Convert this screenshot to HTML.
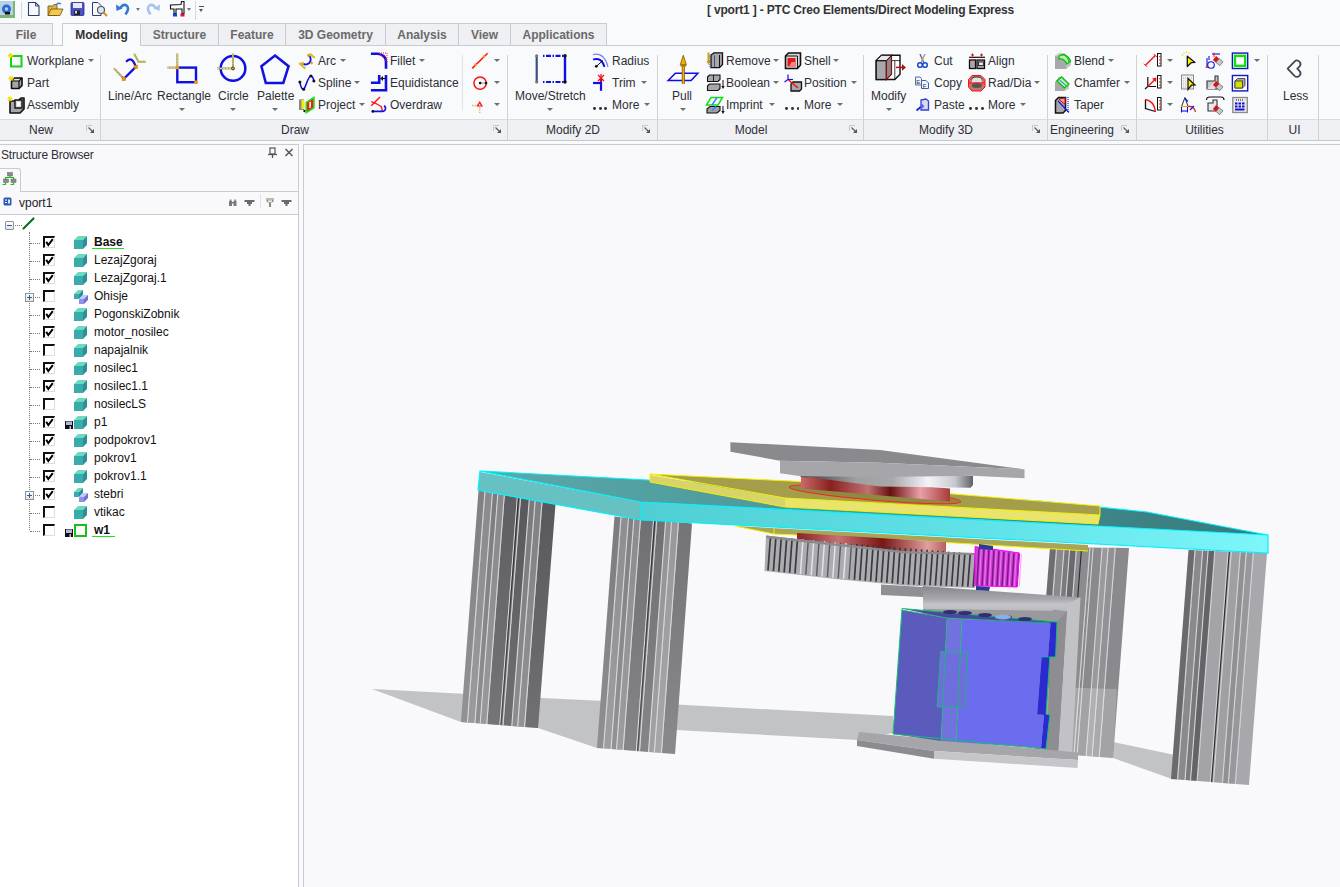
<!DOCTYPE html>
<html><head><meta charset="utf-8">
<style>
*{margin:0;padding:0;box-sizing:border-box}
html,body{width:1340px;height:887px;overflow:hidden;background:#f9fafc;font-family:"Liberation Sans",sans-serif;color:#3d3d3d;position:relative}
.a{position:absolute}
.t{position:absolute;font-size:12px;line-height:14px;white-space:nowrap;color:#2e2e36}
.tab{position:absolute;top:23px;height:22px;border:1px solid #c9cbcf;border-bottom:none;background:#eef0f3;font-weight:bold;font-size:12px;line-height:22px;text-align:center;color:#6a6a6a}
.sep{position:absolute;width:1px;background:#d0d1d5}
.dd{position:absolute;width:0;height:0;border-left:3px solid transparent;border-right:3px solid transparent;border-top:3px solid #6e6e6e}
.gl{position:absolute;top:120px;height:20px;font-size:12px;line-height:21px;color:#2e2e36;text-align:center}
.tr{position:absolute;font-size:12px;line-height:14px;white-space:nowrap;color:#111}
svg{position:absolute;overflow:visible}
</style></head><body>
<!-- title bar -->
<div class="a" style="left:0;top:0;width:1340px;height:23px;background:#f9fafc"></div>
<div class="t" style="left:707px;top:3px;font-weight:bold;color:#333;font-size:12px;letter-spacing:-0.18px">[ vport1 ] - PTC Creo Elements/Direct Modeling Express</div>

<!-- tabs row baseline -->
<div class="a" style="left:0;top:45px;width:1340px;height:1px;background:#c9cbcf"></div>
<div class="tab" style="left:0;width:53px;border-left:none">File</div>
<div class="tab" style="left:62px;width:79px;background:#f9fafc;color:#333;height:23px;z-index:2">Modeling</div>
<div class="tab" style="left:141px;width:78px;border-left:none">Structure</div>
<div class="tab" style="left:219px;width:67px;border-left:none">Feature</div>
<div class="tab" style="left:286px;width:100px;border-left:none">3D Geometry</div>
<div class="tab" style="left:386px;width:73px;border-left:none">Analysis</div>
<div class="tab" style="left:459px;width:52px;border-left:none">View</div>
<div class="tab" style="left:511px;width:96px;border-left:none">Applications</div>

<!-- ribbon body -->
<div class="a" style="left:0;top:46px;width:1340px;height:73px;background:#f9fafc"></div>
<div class="a" style="left:0;top:119px;width:1340px;height:1px;background:#d9dbde"></div>
<div class="a" style="left:0;top:120px;width:1340px;height:20px;background:#eff0f3"></div>
<div class="a" style="left:0;top:140px;width:1340px;height:1px;background:#c6c7cb"></div>
<div class="a" style="left:0;top:141px;width:1340px;height:3px;background:#f9fafc"></div>

<!-- group separators -->
<div class="sep" style="left:100px;top:55px;height:85px"></div>
<div class="sep" style="left:507px;top:55px;height:85px"></div>
<div class="sep" style="left:657px;top:55px;height:85px"></div>
<div class="sep" style="left:863px;top:55px;height:85px"></div>
<div class="sep" style="left:1047px;top:55px;height:85px"></div>
<div class="sep" style="left:1136px;top:55px;height:85px"></div>
<div class="sep" style="left:1267px;top:55px;height:85px"></div>
<div class="sep" style="left:1318px;top:55px;height:85px"></div>
<div class="sep" style="left:462px;top:55px;height:56px;background:#e3e4e7"></div>

<!-- group labels -->
<div class="gl" style="left:0;width:82px">New</div>
<div class="gl" style="left:100px;width:390px">Draw</div>
<div class="gl" style="left:507px;width:132px">Modify 2D</div>
<div class="gl" style="left:657px;width:188px">Model</div>
<div class="gl" style="left:863px;width:166px">Modify 3D</div>
<div class="gl" style="left:1047px;width:70px">Engineering</div>
<div class="gl" style="left:1139px;width:131px">Utilities</div>
<div class="gl" style="left:1269px;width:51px">UI</div>

<!-- ribbon text -->
<div class="t" style="left:27px;top:54px">Workplane</div>
<div class="t" style="left:27px;top:76px">Part</div>
<div class="t" style="left:27px;top:98px">Assembly</div>
<div class="t" style="left:108px;top:89px">Line/Arc</div>
<div class="t" style="left:157px;top:89px">Rectangle</div>
<div class="t" style="left:218px;top:89px">Circle</div>
<div class="t" style="left:257px;top:89px">Palette</div>
<div class="t" style="left:318px;top:54px">Arc</div>
<div class="t" style="left:318px;top:76px">Spline</div>
<div class="t" style="left:318px;top:98px">Project</div>
<div class="t" style="left:390px;top:54px">Fillet</div>
<div class="t" style="left:390px;top:76px">Equidistance</div>
<div class="t" style="left:390px;top:98px">Overdraw</div>
<div class="t" style="left:515px;top:89px">Move/Stretch</div>
<div class="t" style="left:612px;top:54px">Radius</div>
<div class="t" style="left:612px;top:76px">Trim</div>
<div class="t" style="left:612px;top:98px">More</div>
<div class="t" style="left:672px;top:89px">Pull</div>
<div class="t" style="left:726px;top:54px">Remove</div>
<div class="t" style="left:726px;top:76px">Boolean</div>
<div class="t" style="left:726px;top:98px">Imprint</div>
<div class="t" style="left:804px;top:54px">Shell</div>
<div class="t" style="left:804px;top:76px">Position</div>
<div class="t" style="left:804px;top:98px">More</div>
<div class="t" style="left:871px;top:89px">Modify</div>
<div class="t" style="left:934px;top:54px">Cut</div>
<div class="t" style="left:934px;top:76px">Copy</div>
<div class="t" style="left:934px;top:98px">Paste</div>
<div class="t" style="left:988px;top:54px">Align</div>
<div class="t" style="left:988px;top:76px">Rad/Dia</div>
<div class="t" style="left:988px;top:98px">More</div>
<div class="t" style="left:1074px;top:54px">Blend</div>
<div class="t" style="left:1074px;top:76px">Chamfer</div>
<div class="t" style="left:1074px;top:98px">Taper</div>
<div class="t" style="left:1283px;top:89px">Less</div>

<!-- dropdown arrows -->
<div class="dd" style="left:88px;top:59px"></div>
<div class="dd" style="left:179px;top:108px"></div>
<div class="dd" style="left:230px;top:108px"></div>
<div class="dd" style="left:272px;top:108px"></div>
<div class="dd" style="left:340px;top:59px"></div>
<div class="dd" style="left:354px;top:81px"></div>
<div class="dd" style="left:359px;top:103px"></div>
<div class="dd" style="left:419px;top:59px"></div>
<div class="dd" style="left:494px;top:59px"></div>
<div class="dd" style="left:494px;top:81px"></div>
<div class="dd" style="left:494px;top:103px"></div>
<div class="dd" style="left:547px;top:108px"></div>
<div class="dd" style="left:641px;top:81px"></div>
<div class="dd" style="left:644px;top:103px"></div>
<div class="dd" style="left:680px;top:108px"></div>
<div class="dd" style="left:773px;top:59px"></div>
<div class="dd" style="left:773px;top:81px"></div>
<div class="dd" style="left:769px;top:103px"></div>
<div class="dd" style="left:833px;top:59px"></div>
<div class="dd" style="left:851px;top:81px"></div>
<div class="dd" style="left:837px;top:103px"></div>
<div class="dd" style="left:886px;top:108px"></div>
<div class="dd" style="left:1034px;top:81px"></div>
<div class="dd" style="left:1020px;top:103px"></div>
<div class="dd" style="left:1108px;top:59px"></div>
<div class="dd" style="left:1124px;top:81px"></div>
<div class="dd" style="left:1167px;top:59px"></div>
<div class="dd" style="left:1167px;top:81px"></div>
<div class="dd" style="left:1167px;top:103px"></div>
<div class="dd" style="left:1254px;top:59px"></div>

<!-- ICONS -->
<svg style="left:7px;top:52px" width="18" height="18" viewBox="0 0 18 18"><rect x="4" y="4" width="10.5" height="10.5" fill="none" stroke="#18d018" stroke-width="2"/><g stroke="#f0e000" stroke-width="1.1"><line x1="0.8999999999999999" y1="3.5" x2="6.1" y2="3.5"/><line x1="3.5" y1="0.8999999999999999" x2="3.5" y2="6.1"/><line x1="1.6800000000000002" y1="1.6800000000000002" x2="5.32" y2="5.32"/><line x1="1.6800000000000002" y1="5.32" x2="5.32" y2="1.6800000000000002"/></g></svg>
<svg style="left:7px;top:74px" width="18" height="18" viewBox="0 0 18 18"><polygon points="4.5,7 7.5,4 15,4 15,11.5 12,14.5 4.5,14.5" fill="#a6a6aa" stroke="#111" stroke-width="1.6" stroke-linejoin="round"/><polyline points="4.5,7 12,7 15,4 M12,7" fill="none" stroke="#111" stroke-width="1.2"/><line x1="12" y1="7" x2="12" y2="14.5" stroke="#111" stroke-width="1.2"/><polygon points="6,6 8,5 13,5 11.5,6.2" fill="#e8e8ea"/><g stroke="#f0e000" stroke-width="1.1"><line x1="1.4" y1="4.5" x2="6.6" y2="4.5"/><line x1="4" y1="1.9" x2="4" y2="7.1"/><line x1="2.18" y1="2.68" x2="5.82" y2="6.32"/><line x1="2.18" y1="6.32" x2="5.82" y2="2.68"/></g></svg>
<svg style="left:6px;top:95px" width="20" height="20" viewBox="0 0 20 20"><polygon points="4,6 12,6 15,3 18,3 18,14 14,18 4,18" fill="#a6a6aa" stroke="#111" stroke-width="1.6" stroke-linejoin="round"/><polygon points="9,5 16,5 16,13 9,13" fill="#d8d8da" stroke="#111" stroke-width="1.4"/><rect x="11" y="7" width="3" height="4" fill="#fff"/><g stroke="#f0e000" stroke-width="1.1"><line x1="1.4" y1="4" x2="6.6" y2="4"/><line x1="4" y1="1.4" x2="4" y2="6.6"/><line x1="2.18" y1="2.18" x2="5.82" y2="5.82"/><line x1="2.18" y1="5.82" x2="5.82" y2="2.18"/></g></svg>
<svg style="left:105px;top:48px" width="50" height="40" viewBox="0 0 50 40"><line x1="9" y1="20.4" x2="18.9" y2="30.8" stroke="#9a9a60" stroke-width="2"/><line x1="9" y1="20.4" x2="18.9" y2="30.8" stroke="#f0e060" stroke-width="1" stroke-dasharray="2,1"/><polyline points="29.1,5.8 33.5,13.8 40.7,13.8" fill="none" stroke="#9a9a60" stroke-width="2"/><polyline points="29.1,5.8 33.5,13.8 40.7,13.8" fill="none" stroke="#f0e060" stroke-width="1" stroke-dasharray="2,1"/><line x1="18.9" y1="30.8" x2="30.8" y2="18.9" stroke="#1010e0" stroke-width="2.3"/><path d="M21.1,13.8 Q27,7 30.8,18.9" fill="none" stroke="#1010e0" stroke-width="2.3"/><rect x="17.2" y="29.1" width="3.4" height="3.4" fill="#f09a10" stroke="#c06000" stroke-width="0.5"/><rect x="29.1" y="17.2" width="3.4" height="3.4" fill="#f09a10" stroke="#c06000" stroke-width="0.5"/></svg>
<svg style="left:160px;top:48px" width="45" height="40" viewBox="0 0 45 40"><line x1="17.3" y1="5.5" x2="17.3" y2="19.6" stroke="#9a9a70" stroke-width="2"/><line x1="17.3" y1="5.5" x2="17.3" y2="19.6" stroke="#f0e060" stroke-width="1" stroke-dasharray="2,1"/><line x1="7.3" y1="19.6" x2="17.3" y2="19.6" stroke="#9a9a70" stroke-width="2"/><line x1="7.3" y1="19.6" x2="17.3" y2="19.6" stroke="#f0e060" stroke-width="1" stroke-dasharray="2,1"/><rect x="17.3" y="19.6" width="18.7" height="14.6" fill="none" stroke="#1010e0" stroke-width="2.4"/><circle cx="17.3" cy="19.6" r="1.9" fill="#f09a10"/><circle cx="36" cy="34.2" r="1.9" fill="#f09a10"/></svg>
<svg style="left:210px;top:48px" width="45" height="40" viewBox="0 0 45 40"><circle cx="23" cy="20.4" r="12.3" fill="none" stroke="#1010e0" stroke-width="2.5"/><line x1="23" y1="5.5" x2="23" y2="20.4" stroke="#9a9a70" stroke-width="2"/><line x1="23" y1="5.5" x2="23" y2="20.4" stroke="#f0e060" stroke-width="1" stroke-dasharray="2,1"/><line x1="7" y1="20.4" x2="23" y2="20.4" stroke="#9a9a70" stroke-width="2"/><line x1="7" y1="20.4" x2="23" y2="20.4" stroke="#f0e060" stroke-width="1" stroke-dasharray="2,1"/><circle cx="23" cy="20.4" r="1.5" fill="#f09a10" stroke="#000" stroke-width="0.6"/></svg>
<svg style="left:255px;top:48px" width="40" height="40" viewBox="0 0 40 40"><polygon points="20,7.6 33.6,18.2 28.3,34.9 10.8,34.9 6.4,18.2" fill="none" stroke="#1010e0" stroke-width="2.5" stroke-linejoin="miter"/></svg>
<svg style="left:296px;top:50px" width="22" height="22" viewBox="0 0 22 22"><path d="M12.6,5.2 A5,5 0 1 1 6.6,13.5" fill="none" stroke="#1010e0" stroke-width="1.8"/><line x1="13.7" y1="3.7" x2="18.6" y2="7.8" stroke="#a0a040" stroke-width="2"/><line x1="13.7" y1="3.7" x2="18.6" y2="7.8" stroke="#f8f000" stroke-width="1"/><line x1="3.2" y1="13.1" x2="9.2" y2="18.4" stroke="#a0a040" stroke-width="2"/><line x1="3.2" y1="13.1" x2="9.2" y2="18.4" stroke="#f8f000" stroke-width="1"/><circle cx="12.6" cy="5.2" r="1.5" fill="#f09a10"/><circle cx="6.6" cy="13.5" r="1.5" fill="#f09a10"/><circle cx="15.6" cy="13.1" r="1.3" fill="#f09a10"/></svg>
<svg style="left:296px;top:72px" width="22" height="22" viewBox="0 0 22 22"><path d="M3.9,10 C4.5,15 6.5,18 7.7,17.2 C10,15 12,4 14.9,4 C16.5,4 17.5,7 17.9,8.9" fill="none" stroke="#1010e0" stroke-width="1.6"/><circle cx="3.9" cy="10" r="1.5" fill="#111"/><circle cx="7.7" cy="17.2" r="1.5" fill="#111"/><circle cx="14.9" cy="4" r="1.5" fill="#111"/><circle cx="17.9" cy="8.9" r="1.5" fill="#111"/></svg>
<svg style="left:296px;top:94px" width="22" height="22" viewBox="0 0 22 22"><rect x="3" y="5.4" width="5" height="10.6" fill="#8a8a8a"/><rect x="5.5" y="6" width="3" height="9" fill="#f0f000"/><circle cx="8.5" cy="17" r="1.2" fill="#111"/><polygon points="10.3,18.6 10.3,8.4 17.9,3.5 17.9,13.7" fill="#ff1818" stroke="#18e018" stroke-width="1.6"/><rect x="13.3" y="8" width="1.6" height="6" fill="#fff" transform="skewY(-30) translate(0,8)"/></svg>
<svg style="left:368px;top:50px" width="22" height="22" viewBox="0 0 22 22"><path d="M2.9,3.7 L10,3.7 Q18,5 18,11.6 L18,18.8" fill="none" stroke="#1010e0" stroke-width="2.6"/><polygon points="11,3 19,3 19,12" fill="none" stroke="#ff2020" stroke-width="1" stroke-dasharray="1,1"/></svg>
<svg style="left:368px;top:72px" width="22" height="22" viewBox="0 0 22 22"><polyline points="18,3 18,18.3 2.9,18.3" fill="none" stroke="#1010e0" stroke-width="2.6"/><polyline points="11.2,3 11.2,10.7 2.9,10.7" fill="none" stroke="#1010e0" stroke-width="2.6"/><line x1="12.5" y1="6.5" x2="17" y2="6.5" stroke="#111" stroke-width="1.2"/><polygon points="12.3,6.5 15,4 15,9" fill="#111"/></svg>
<svg style="left:368px;top:94px" width="22" height="22" viewBox="0 0 22 22"><line x1="3.3" y1="11.8" x2="12" y2="3.1" stroke="#ff1010" stroke-width="1.4"/><path d="M3.3,7.6 Q10,10 13.1,12.5 Q14,15 14.5,17" fill="none" stroke="#ff1010" stroke-width="1.4"/><path d="M4.8,17.4 L14.6,17.4 A3,3 0 0 0 16,11.8" fill="none" stroke="#1010e0" stroke-width="1.6"/><circle cx="4.8" cy="17.4" r="1.4" fill="#111"/></svg>
<svg style="left:468px;top:50px" width="22" height="22" viewBox="0 0 22 22"><line x1="4.2" y1="18.4" x2="19.6" y2="3.3" stroke="#ff1010" stroke-width="1.5"/><circle cx="7.6" cy="14.6" r="1.4" fill="#f0a020"/><circle cx="15.9" cy="6.7" r="1.4" fill="#f0a020"/></svg>
<svg style="left:468px;top:72px" width="22" height="22" viewBox="0 0 22 22"><circle cx="12.1" cy="11.1" r="6.2" fill="none" stroke="#ff1010" stroke-width="1.5"/><line x1="12.1" y1="11.1" x2="18" y2="11.1" stroke="#777" stroke-width="0.8"/><circle cx="12.1" cy="11.1" r="1.3" fill="#111"/><circle cx="18.1" cy="11.1" r="1.3" fill="#111"/></svg>
<svg style="left:468px;top:94px" width="22" height="22" viewBox="0 0 22 22"><line x1="4" y1="11.5" x2="10" y2="11.5" stroke="#e0c060" stroke-width="1.5" stroke-dasharray="1.5,1"/><line x1="11.7" y1="13" x2="11.7" y2="19" stroke="#e0c060" stroke-width="1.5" stroke-dasharray="1.5,1"/><polygon points="11.7,7 15,12.5 8.4,12.5" fill="#ff1010"/><polygon points="11.7,9.5 12.8,11.6 10.6,11.6" fill="#fff"/></svg>
<svg style="left:530px;top:50px" width="42" height="36" viewBox="0 0 42 36"><line x1="6.7" y1="5.8" x2="6.7" y2="32" stroke="#3a5080" stroke-width="2.2"/><circle cx="6.7" cy="5.8" r="1.6" fill="#777"/><circle cx="6.7" cy="32" r="1.6" fill="#777"/><line x1="13" y1="5.8" x2="35" y2="5.8" stroke="#1010e0" stroke-width="2.2" stroke-dasharray="1.5,1.5,5,1.5"/><line x1="13" y1="32" x2="35" y2="32" stroke="#1010e0" stroke-width="2.2" stroke-dasharray="1.5,1.5,5,1.5"/><line x1="35" y1="5.8" x2="35" y2="32" stroke="#1010e0" stroke-width="2.4"/><circle cx="35" cy="5.8" r="1.7" fill="#111"/><circle cx="35" cy="32" r="1.7" fill="#111"/></svg>
<svg style="left:590px;top:50px" width="22" height="22" viewBox="0 0 22 22"><path d="M3,4.6 Q14,2 18,17" fill="none" stroke="#8080f0" stroke-width="1.3"/><path d="M3,9.5 Q12,7 14.5,17" fill="none" stroke="#1010e0" stroke-width="1.8"/><line x1="6.3" y1="16.3" x2="13" y2="10.5" stroke="#111" stroke-width="1"/><circle cx="6.3" cy="16.3" r="1.4" fill="#111"/></svg>
<svg style="left:590px;top:72px" width="22" height="22" viewBox="0 0 22 22"><line x1="3" y1="11" x2="11" y2="11" stroke="#1010e0" stroke-width="2.2"/><line x1="11" y1="6.3" x2="11" y2="18.8" stroke="#1010e0" stroke-width="2.2"/><g stroke="#ff1010" stroke-width="1.3"><line x1="8" y1="3" x2="14" y2="9"/><line x1="14" y1="3" x2="8" y2="9"/><line x1="11" y1="2" x2="11" y2="10"/></g></svg>
<div class="a" style="left:593.3000000000001px;top:107.2px;width:2.8px;height:2.8px;border-radius:50%;background:#333"></div>
<div class="a" style="left:598.8000000000001px;top:107.2px;width:2.8px;height:2.8px;border-radius:50%;background:#333"></div>
<div class="a" style="left:604.3000000000001px;top:107.2px;width:2.8px;height:2.8px;border-radius:50%;background:#333"></div>
<svg style="left:664px;top:50px" width="40" height="40" viewBox="0 0 40 40"><polygon points="4.2,30.5 11.4,23.2 33.8,23.2 27.1,30.5" fill="none" stroke="#1010e0" stroke-width="1.6"/><line x1="19.3" y1="14" x2="19.3" y2="33.8" stroke="#7a5000" stroke-width="3"/><line x1="19.3" y1="14" x2="19.3" y2="33.8" stroke="#f0b000" stroke-width="1.6"/><polygon points="19.3,5.3 22.4,14.8 16.2,14.8" fill="#f0b000" stroke="#7a5000" stroke-width="0.8"/><rect x="16.5" y="14.5" width="5.6" height="2" fill="#b07800"/></svg>
<svg style="left:704px;top:50px" width="22" height="22" viewBox="0 0 22 22"><rect x="3.5" y="2.5" width="2" height="10" fill="#d0a000"/><polygon points="2.5,11 6.5,11 4.5,15" fill="#d0a000"/><polygon points="7,5 10,2.8 18.5,2.8 18.5,14.5 15.5,17.7 7,17.7" fill="#a8a8ac" stroke="#111" stroke-width="1.3"/><line x1="15.5" y1="5" x2="15.5" y2="17.7" stroke="#111" stroke-width="1"/><line x1="10.5" y1="5.5" x2="10.5" y2="17" stroke="#333" stroke-width="0.8"/><rect x="5.5" y="5" width="5" height="12" fill="none" stroke="#3060e0" stroke-width="0.6" stroke-dasharray="1,1"/></svg>
<svg style="left:704px;top:72px" width="22" height="22" viewBox="0 0 22 22"><polygon points="3.5,5 5.5,3 16,3 16,7.5 14,9.5 3.5,9.5" fill="#a8a8ac" stroke="#111" stroke-width="1.1"/><line x1="9.5" y1="3" x2="9.5" y2="9.5" stroke="#111" stroke-width="0.9"/><polygon points="3.5,14 5.5,12 16,12 16,16.5 14,18.5 3.5,18.5" fill="#a8a8ac" stroke="#111" stroke-width="1.1"/><line x1="19" y1="8" x2="19" y2="15" stroke="#111" stroke-width="1"/><polygon points="17.3,14 20.7,14 19,17" fill="#111"/></svg>
<svg style="left:704px;top:94px" width="22" height="22" viewBox="0 0 22 22"><polygon points="2.5,11 7,3.5 18.5,3.5 14,11" fill="none" stroke="#10e010" stroke-width="1.5"/><line x1="8" y1="11" x2="13" y2="3.5" stroke="#3080ff" stroke-width="1.4"/><polygon points="3,15 6,12.5 16,12.5 16,16.5 13,19 3,19" fill="#a0a0a4" stroke="#111" stroke-width="1.1"/><line x1="8" y1="16.5" x2="12" y2="12.5" stroke="#3080ff" stroke-width="1.4"/><line x1="19" y1="12" x2="19" y2="18" stroke="#111" stroke-width="1"/><polygon points="17.3,17 20.7,17 19,20" fill="#111"/></svg>
<svg style="left:782px;top:50px" width="22" height="22" viewBox="0 0 22 22"><polygon points="3.5,6 6.5,3 18.5,3 18.5,15 15.5,18.5 3.5,18.5" fill="#d8d8da" stroke="#111" stroke-width="1.6"/><line x1="15.5" y1="6" x2="15.5" y2="18.5" stroke="#111" stroke-width="1"/><line x1="3.5" y1="6" x2="15.5" y2="6" stroke="#111" stroke-width="1"/><rect x="5.5" y="8" width="8" height="8.5" fill="#e01818"/><polygon points="9.5,12 13.5,12 13.5,16.5 7,16.5" fill="#ff8080"/></svg>
<svg style="left:782px;top:72px" width="22" height="22" viewBox="0 0 22 22"><polyline points="6,2.5 6,7.5 2.5,10" fill="none" stroke="#1010e0" stroke-width="1.2"/><line x1="6" y1="7.5" x2="11" y2="7.5" stroke="#1010e0" stroke-width="1.2"/><polygon points="9,12 11,10 19.5,10 19.5,17 17.5,19 9,19" fill="#a8a8ac" stroke="#111" stroke-width="1.3"/><line x1="6.5" y1="8" x2="16" y2="16" stroke="#ff1010" stroke-width="1.6"/></svg>
<div class="a" style="left:785.4px;top:107px;width:2.8px;height:2.8px;border-radius:50%;background:#333"></div>
<div class="a" style="left:791.0px;top:107px;width:2.8px;height:2.8px;border-radius:50%;background:#333"></div>
<div class="a" style="left:796.6px;top:107px;width:2.8px;height:2.8px;border-radius:50%;background:#333"></div>
<svg style="left:870px;top:50px" width="42" height="36" viewBox="0 0 42 36"><polygon points="6.2,10.6 11.5,5.3 30,5.3 30,24.2 24.8,29.5 6.2,29.5" fill="#fff" stroke="#111" stroke-width="1.4"/><rect x="6.2" y="10.6" width="10.2" height="18.9" fill="#a8a8ac" stroke="#111" stroke-width="1.3"/><polygon points="16.4,10.6 21.5,5.3 21.5,24.2 16.4,29.5" fill="#8a8a8e" stroke="#8a1010" stroke-width="1.2"/><polygon points="6.2,10.6 11.5,5.3 21.5,5.3 16.4,10.6" fill="#e8e8ea" stroke="#111" stroke-width="1"/><line x1="24.8" y1="10.6" x2="24.8" y2="29.5" stroke="#111" stroke-width="0.8"/><line x1="21.5" y1="10.6" x2="30" y2="10.6" stroke="#111" stroke-width="0.8"/><line x1="26" y1="17.4" x2="33" y2="17.4" stroke="#b01010" stroke-width="1.5"/><polygon points="32,14 36,17.4 32,20.8" fill="#b01010"/></svg>
<svg style="left:914px;top:50px" width="18" height="20" viewBox="0 0 18 20"><line x1="6" y1="4" x2="10" y2="13" stroke="#707070" stroke-width="1.5"/><line x1="11" y1="4" x2="7" y2="13" stroke="#a0a0a0" stroke-width="1.5"/><circle cx="6" cy="15" r="2.3" fill="none" stroke="#2050d0" stroke-width="1.6"/><circle cx="11" cy="15" r="2.3" fill="none" stroke="#2050d0" stroke-width="1.6"/></svg>
<svg style="left:913px;top:74px" width="20" height="18" viewBox="0 0 20 18"><polygon points="2.5,3 7,3 8.5,4.5 8.5,11 2.5,11" fill="#f4f4f8" stroke="#5070a0" stroke-width="1"/><text x="3.3" y="10" font-size="6" font-family="Liberation Sans" fill="#333">E</text><polygon points="8.5,6.5 13,6.5 15.5,9 15.5,14.5 8.5,14.5" fill="#f4f4f8" stroke="#3060c0" stroke-width="1"/><text x="9.8" y="13.6" font-size="6" font-family="Liberation Sans" fill="#333">F</text></svg>
<svg style="left:913px;top:96px" width="20" height="18" viewBox="0 0 20 18"><polygon points="8,4 13,3 15.5,5 15.5,14 8,14" fill="#d8d8e8" stroke="#3040e0" stroke-width="1.3"/><line x1="3.5" y1="14.5" x2="10" y2="9" stroke="#2020e0" stroke-width="1.8"/><circle cx="9" cy="10.5" r="1.8" fill="#6060e0"/></svg>
<svg style="left:966px;top:50px" width="22" height="22" viewBox="0 0 22 22"><line x1="3" y1="7.3" x2="19" y2="7.3" stroke="#111" stroke-width="1.2"/><g stroke="#d01010" stroke-width="1"><line x1="6.5" y1="3.5" x2="6.5" y2="6.5"/><line x1="5" y1="5" x2="8" y2="5"/><line x1="15.5" y1="3.5" x2="15.5" y2="6.5"/><line x1="14" y1="5" x2="17" y2="5"/></g><rect x="3.5" y="10" width="6" height="8.5" fill="#a8a8ac" stroke="#111" stroke-width="1.3"/><rect x="4.5" y="9.5" width="4" height="1.2" fill="#e01010"/><rect x="11" y="10" width="7.5" height="8.5" fill="#a8a8ac" stroke="#111" stroke-width="1.3"/><rect x="12.5" y="12" width="5" height="3.5" fill="#e8e8ea" stroke="#111" stroke-width="0.8"/></svg>
<svg style="left:966px;top:72px" width="22" height="22" viewBox="0 0 22 22"><polygon points="6,3.5 15,3.5 19,7.5 19,15 15,19 6,19 2.5,15 2.5,7.5" fill="#c87070" stroke="#ff1010" stroke-width="1"/><ellipse cx="10.8" cy="7.5" rx="5" ry="2.5" fill="#e0e0e0" stroke="#222" stroke-width="0.9"/><rect x="5.8" y="7.5" width="10" height="3" fill="#e0e0e0"/><ellipse cx="10.8" cy="13.5" rx="5" ry="2.5" fill="#555" /><line x1="3" y1="11" x2="18.5" y2="11" stroke="#ff1010" stroke-width="1"/></svg>
<div class="a" style="left:969.4px;top:107.2px;width:2.8px;height:2.8px;border-radius:50%;background:#333"></div>
<div class="a" style="left:975.2px;top:107.2px;width:2.8px;height:2.8px;border-radius:50%;background:#333"></div>
<div class="a" style="left:981.0px;top:107.2px;width:2.8px;height:2.8px;border-radius:50%;background:#333"></div>
<svg style="left:1052px;top:50px" width="22" height="22" viewBox="0 0 22 22"><polygon points="3,6 7,3 12,3 18.8,10 18.8,15 14,19 3,19" fill="#a8a8ac"/><polygon points="3,6 7,3 12,3 8,7" fill="#d0d0d2"/><polygon points="14,19 18.8,15 18.8,10 14,14" fill="#c4c4c6"/><path d="M7,6 Q14,2 18.5,11 L15,14 Q12,8 7,9 Z" fill="#b8f0b8" stroke="#10c010" stroke-width="1.4"/><path d="M9,4.5 Q15,4 17,12" fill="none" stroke="#10c010" stroke-width="1"/></svg>
<svg style="left:1052px;top:74px" width="22" height="22" viewBox="0 0 22 22"><polygon points="3,8 7,3 11,3 16.9,10 16.9,14.5 12.5,17 3,17" fill="#a8a8ac"/><polygon points="16.9,10 16.9,14.5 12.5,17 12.5,13" fill="#c8c8ca"/><polygon points="5,7 9.5,3 16.9,10 12.5,14" fill="#b8f0b8" stroke="#10c010" stroke-width="1.4"/><line x1="7.5" y1="6" x2="14" y2="11.5" stroke="#2050e0" stroke-width="0.9"/></svg>
<svg style="left:1052px;top:94px" width="22" height="22" viewBox="0 0 22 22"><polygon points="3.5,6.5 6.5,3.5 13.5,3.5 13.5,16.5 11,19 3.5,19" fill="#a8a8ac" stroke="#111" stroke-width="1.5"/><polygon points="7,5 13,4 13,10 10,8" fill="#f0a0a0" stroke="#d01010" stroke-width="1"/><line x1="6" y1="7" x2="17" y2="18.5" stroke="#1010e0" stroke-width="1.1"/><line x1="16" y1="3" x2="16" y2="18" stroke="#1010e0" stroke-width="1.1" stroke-dasharray="1,1"/></svg>
<svg style="left:1143px;top:52px" width="22" height="18" viewBox="0 0 22 18"><line x1="2.5" y1="13.3" x2="12.3" y2="3.5" stroke="#ff1010" stroke-width="1.4"/><line x1="1" y1="11.8" x2="4" y2="14.8" stroke="#ff1010" stroke-width="1"/><line x1="10.8" y1="2" x2="13.8" y2="5" stroke="#ff1010" stroke-width="1"/><rect x="14.5" y="1.5" width="3.5" height="12.5" fill="#fff" stroke="#111" stroke-width="1"/><g fill="#e01010"><rect x="16.3" y="4" width="1.3" height="1.3"/><rect x="16.3" y="7.3" width="1.3" height="1.3"/><rect x="16.3" y="10.6" width="1.3" height="1.3"/></g></svg>
<svg style="left:1143px;top:74px" width="22" height="18" viewBox="0 0 22 18"><polyline points="4.8,3 4.8,12.5 13,12.5" fill="none" stroke="#111" stroke-width="1.2"/><line x1="2" y1="15" x2="4.8" y2="12.5" stroke="#111" stroke-width="1.2"/><line x1="4.8" y1="12.5" x2="12.5" y2="5" stroke="#ff1010" stroke-width="1.4"/><polygon points="13.5,3.5 13,8 9,4.5" fill="#ff1010"/><rect x="14.5" y="1.5" width="3.5" height="12.5" fill="#fff" stroke="#111" stroke-width="1"/><g fill="#e01010"><rect x="16.3" y="4" width="1.3" height="1.3"/><rect x="16.3" y="7.3" width="1.3" height="1.3"/><rect x="16.3" y="10.6" width="1.3" height="1.3"/></g></svg>
<svg style="left:1143px;top:96px" width="22" height="18" viewBox="0 0 22 18"><polyline points="2.5,3.5 2.5,12.5 12.5,15.5" fill="none" stroke="#111" stroke-width="1.3"/><path d="M2.5,3.5 Q11,5 12.5,15.5" fill="none" stroke="#ff1010" stroke-width="1.5"/><rect x="14.5" y="1.5" width="3.5" height="12.5" fill="#fff" stroke="#111" stroke-width="1"/><g fill="#e01010"><rect x="16.3" y="4" width="1.3" height="1.3"/><rect x="16.3" y="7.3" width="1.3" height="1.3"/><rect x="16.3" y="10.6" width="1.3" height="1.3"/></g></svg>
<svg style="left:1180px;top:50px" width="20" height="20" viewBox="0 0 20 20"><polygon points="7.3,6.2 15,12.4 11.5,12.6 7.3,16.5" fill="#f8f000" stroke="#111" stroke-width="1.3" stroke-linejoin="round"/><g fill="#e8d800"><circle cx="2.5" cy="5" r="0.7"/><circle cx="4" cy="3" r="0.7"/><circle cx="6.5" cy="2.2" r="0.7"/><circle cx="9" cy="3" r="0.7"/></g></svg>
<svg style="left:1180px;top:72px" width="20" height="20" viewBox="0 0 20 20"><rect x="1.5" y="3" width="12" height="14" fill="#f0f0f0" stroke="#888" stroke-width="1"/><g stroke="#999" stroke-width="0.6" stroke-dasharray="1,1"><line x1="3" y1="6" x2="12" y2="6"/><line x1="3" y1="9" x2="12" y2="9"/><line x1="3" y1="12" x2="12" y2="12"/><line x1="3" y1="15" x2="12" y2="15"/></g><polygon points="8,6.5 15,13 11.5,13.2 8,17.5" fill="#f8f000" stroke="#111" stroke-width="1.2"/></svg>
<svg style="left:1180px;top:94px" width="20" height="20" viewBox="0 0 20 20"><polyline points="1.5,12.5 5,3.5 8,12.5" fill="none" stroke="#111" stroke-width="0.9"/><line x1="1" y1="12.5" x2="13" y2="12.5" stroke="#f0a020" stroke-width="1.2"/><path d="M8,12.5 Q14,12 15.5,18" fill="none" stroke="#d02020" stroke-width="1.2"/><g stroke="#1010e0" stroke-width="1.1"><line x1="1.5" y1="13" x2="1.5" y2="18.5"/><line x1="7.5" y1="13" x2="7.5" y2="18.5"/><line x1="1.5" y1="17" x2="7.5" y2="17"/><line x1="5" y1="4.5" x2="8" y2="7.5"/><line x1="10" y1="16" x2="14" y2="12"/></g></svg>
<svg style="left:1205px;top:50px" width="22" height="22" viewBox="0 0 22 22"><g stroke="#1010e0" stroke-width="1.1" fill="none"><circle cx="6" cy="15" r="3.3"/><line x1="2" y1="8" x2="2" y2="18"/><line x1="7" y1="4" x2="15" y2="4"/><line x1="4" y1="10" x2="4" y2="6"/></g><g stroke="#ff1010" stroke-width="1"><line x1="9" y1="2.5" x2="9" y2="7"/><line x1="0.5" y1="17" x2="3" y2="17"/></g><g transform="translate(9.5,8) rotate(40)"><rect x="0" y="-2.5" width="4" height="5" fill="#e01010"/><rect x="4" y="-2.5" width="5" height="5" fill="#c8c8c8" stroke="#555" stroke-width="0.6"/></g></svg>
<svg style="left:1205px;top:72px" width="22" height="22" viewBox="0 0 22 22"><polygon points="2,17 2,9 10,9 10,4 13,4 13,17" fill="#c8c8ca" stroke="#333" stroke-width="1.1"/><polygon points="2,17 10,9 10,17" fill="#e0e0e2"/><g transform="translate(9.5,11) rotate(40)"><rect x="0" y="-2.5" width="4" height="5" fill="#e01010"/><rect x="4" y="-2.5" width="5" height="5" fill="#c8c8c8" stroke="#555" stroke-width="0.6"/></g></svg>
<svg style="left:1205px;top:94px" width="22" height="22" viewBox="0 0 22 22"><path d="M1.5,6 Q1.5,3 5,3 L16,3 Q19,3 19,6" fill="none" stroke="#111" stroke-width="1.2"/><polygon points="3,17 3,9 8,9 8,6 12,6 12,17" fill="#e8e8ea" stroke="#333" stroke-width="1.1"/><g transform="translate(9.5,13) rotate(40)"><rect x="0" y="-2.5" width="4" height="5" fill="#e01010"/><rect x="4" y="-2.5" width="5" height="5" fill="#c8c8c8" stroke="#555" stroke-width="0.6"/></g></svg>
<svg style="left:1230px;top:51px" width="20" height="20" viewBox="0 0 20 20"><rect x="2.4" y="2.1" width="15.3" height="15.4" fill="#fff" stroke="#1018c0" stroke-width="1.4"/><rect x="5" y="4.8" width="10.2" height="10" fill="none" stroke="#10e010" stroke-width="2.4"/></svg>
<svg style="left:1230px;top:73px" width="20" height="20" viewBox="0 0 20 20"><rect x="2.4" y="2.5" width="15.3" height="15.4" fill="#fff" stroke="#1018c0" stroke-width="1.4"/><polygon points="5,8 7.5,5.5 15,5.5 15,12.5 12.5,15 5,15" fill="#a8a8ac" stroke="#333" stroke-width="0.8"/><rect x="5" y="8" width="7.5" height="7" fill="#d8e000" stroke="#333" stroke-width="0.8"/></svg>
<svg style="left:1230px;top:95px" width="20" height="20" viewBox="0 0 20 20"><rect x="2.8" y="2.5" width="14.5" height="15" fill="#e8e8ea" stroke="#8a8a8a" stroke-width="1.3"/><g fill="#1010d0"><rect x="5" y="7.5" width="2.5" height="2"/><rect x="8.5" y="7.5" width="2.5" height="2"/><rect x="12" y="7.5" width="2.5" height="2"/><rect x="5" y="10.5" width="2.5" height="2"/><rect x="8.5" y="10.5" width="2.5" height="2"/><rect x="12" y="10.5" width="2.5" height="2"/><rect x="5" y="13.5" width="9.5" height="2"/></g><g fill="#111"><rect x="6" y="4.5" width="1" height="1"/><rect x="8" y="4.5" width="1" height="1"/><rect x="10" y="4.5" width="1" height="1"/><rect x="12" y="4.5" width="1" height="1"/></g></svg>
<svg style="left:1280px;top:56px" width="26" height="26" viewBox="0 0 26 26"><path d="M7.6,12.7 L14.5,5.6 Q17,3.2 19.6,5.8 Q21.8,8.3 19.2,10.8 L17.2,12.7 L19.2,14.6 Q21.8,17.1 19.6,19.6 Q17,22.2 14.5,19.8 Z" fill="none" stroke="#3e4650" stroke-width="1.7" stroke-linejoin="round"/></svg>
<svg style="left:86px;top:125px" width="9" height="9"><polyline points="0.5,6 0.5,0.5 6,0.5" fill="none" stroke="#c8c8cc" stroke-width="1"/><line x1="2.5" y1="2.5" x2="7" y2="7" stroke="#555" stroke-width="1.1"/><polygon points="8,4 8,8 4,8" fill="#555"/></svg>
<svg style="left:493px;top:125px" width="9" height="9"><polyline points="0.5,6 0.5,0.5 6,0.5" fill="none" stroke="#c8c8cc" stroke-width="1"/><line x1="2.5" y1="2.5" x2="7" y2="7" stroke="#555" stroke-width="1.1"/><polygon points="8,4 8,8 4,8" fill="#555"/></svg>
<svg style="left:642px;top:125px" width="9" height="9"><polyline points="0.5,6 0.5,0.5 6,0.5" fill="none" stroke="#c8c8cc" stroke-width="1"/><line x1="2.5" y1="2.5" x2="7" y2="7" stroke="#555" stroke-width="1.1"/><polygon points="8,4 8,8 4,8" fill="#555"/></svg>
<svg style="left:849px;top:125px" width="9" height="9"><polyline points="0.5,6 0.5,0.5 6,0.5" fill="none" stroke="#c8c8cc" stroke-width="1"/><line x1="2.5" y1="2.5" x2="7" y2="7" stroke="#555" stroke-width="1.1"/><polygon points="8,4 8,8 4,8" fill="#555"/></svg>
<svg style="left:1032px;top:125px" width="9" height="9"><polyline points="0.5,6 0.5,0.5 6,0.5" fill="none" stroke="#c8c8cc" stroke-width="1"/><line x1="2.5" y1="2.5" x2="7" y2="7" stroke="#555" stroke-width="1.1"/><polygon points="8,4 8,8 4,8" fill="#555"/></svg>
<svg style="left:1121px;top:125px" width="9" height="9"><polyline points="0.5,6 0.5,0.5 6,0.5" fill="none" stroke="#c8c8cc" stroke-width="1"/><line x1="2.5" y1="2.5" x2="7" y2="7" stroke="#555" stroke-width="1.1"/><polygon points="8,4 8,8 4,8" fill="#555"/></svg>
<svg style="left:0px;top:0px" width="20" height="20" viewBox="0 0 20 20"><rect x="0" y="1" width="15" height="17" fill="#7ab870"/><rect x="0" y="1" width="13" height="14" fill="#b8d0e8"/><circle cx="6.5" cy="9" r="4.5" fill="#2a6ad0"/><circle cx="6.5" cy="9" r="1.8" fill="#b8d0e8"/><rect x="5" y="12" width="5" height="2.5" fill="#111"/></svg>
<div class="a" style="left:21px;top:2px;width:1px;height:17px;background:#d8d8dc"></div>
<svg style="left:26px;top:0px" width="16" height="20" viewBox="0 0 16 20"><polygon points="2.5,2.5 9.5,2.5 13,6 13,15.5 2.5,15.5" fill="#f6f8fc" stroke="#2a4070" stroke-width="1.1"/><polyline points="9.5,2.5 9.5,6 13,6" fill="none" stroke="#2a4070" stroke-width="0.9"/></svg>
<svg style="left:46px;top:0px" width="20" height="20" viewBox="0 0 20 20"><polygon points="2,6 7,6 8,4.5 11,4.5 11,15.5 2,15.5" fill="#e0b040" stroke="#6a5010" stroke-width="0.8"/><polygon points="2,15.5 5,9 17,9 14,15.5" fill="#f4c850" stroke="#6a5010" stroke-width="0.8"/><path d="M10,5 Q12,2 15,4" fill="none" stroke="#3a7ad0" stroke-width="1.3"/></svg>
<svg style="left:69px;top:0px" width="18" height="20" viewBox="0 0 18 20"><rect x="2" y="2.5" width="13" height="13" rx="1" fill="#4a50c8" stroke="#2a2a80" stroke-width="0.8"/><rect x="4" y="3" width="9" height="5" fill="#e8e8f0"/><rect x="5" y="10.5" width="6" height="4.5" fill="#222"/><rect x="6" y="11" width="2" height="2.5" fill="#ddd"/></svg>
<svg style="left:91px;top:0px" width="20" height="20" viewBox="0 0 20 20"><polygon points="1.5,2.5 7,2.5 10,5.5 10,15.5 1.5,15.5" fill="#f6f8fc" stroke="#2a4070" stroke-width="1"/><circle cx="10" cy="10" r="3.5" fill="#d8e8f8" stroke="#555" stroke-width="1.2"/><line x1="12.5" y1="12.5" x2="16" y2="16" stroke="#e08a20" stroke-width="2"/></svg>
<svg style="left:112px;top:0px" width="20" height="20" viewBox="0 0 20 20"><path d="M8,8.5 Q11,3.5 14.5,5.5 Q18,8 13.5,14.5" fill="none" stroke="#3a78d8" stroke-width="2.6"/><polygon points="4,4.5 10.5,8.5 4.5,11" fill="#3a78d8"/></svg>
<div class="dd" style="left:136px;top:8px;border-left-width:2.5px;border-right-width:2.5px;border-top-width:3px;border-top-color:#777"></div>
<svg style="left:144px;top:0px" width="20" height="20" viewBox="0 0 20 20"><path d="M12,8.5 Q9,3.5 5.5,5.5 Q2,8 6.5,14.5" fill="none" stroke="#a8c4ec" stroke-width="2.6"/><polygon points="16,4.5 9.5,8.5 15.5,11" fill="#a8c4ec"/></svg>
<svg style="left:168px;top:0px" width="20" height="20" viewBox="0 0 20 20"><path d="M2.5,5 L13,4.5 L13.5,1.5 L16,1.5 L16,13.5 L14,13.5 L14,9 L8,9 L8,13.5 L6,13.5 L6,9 L2.5,9 Z" fill="#fafafa" stroke="#111" stroke-width="1.1"/><rect x="5" y="13.5" width="4" height="3" fill="#1040e0"/><rect x="12.5" y="13.5" width="4" height="3" fill="#e01040"/></svg>
<div class="dd" style="left:187px;top:8px;border-left-width:2.5px;border-right-width:2.5px;border-top-width:3px;border-top-color:#777"></div>
<div class="a" style="left:195px;top:1px;width:1px;height:19px;background:#d8d8dc"></div>
<div class="a" style="left:199px;top:6px;width:5px;height:1.2px;background:#555"></div>
<div class="dd" style="left:199px;top:9px;border-left-width:2.5px;border-right-width:2.5px;border-top-width:3px;border-top-color:#555"></div>

<!-- structure browser panel -->
<div class="a" style="left:0;top:144px;width:299px;height:743px;background:#f9f9fb;border-top:1px solid #c9cbcf;border-right:1px solid #c9cbcf"></div>
<div class="t" style="left:1px;top:148px;color:#2e2e36;letter-spacing:-0.2px">Structure Browser</div>
<div class="a" style="left:0;top:191px;width:298px;height:1px;background:#c9cbcf"></div>
<div class="a" style="left:0;top:168px;width:21px;height:24px;background:#f9f9fb;border:1px solid #c9cbcf;border-left:none;border-bottom:none;border-radius:0 3px 0 0"></div>
<div class="t" style="left:19px;top:196px;color:#222">vport1</div>
<div class="a" style="left:0;top:214px;width:298px;height:1px;background:#c9cbcf"></div>
<div class="a" style="left:0;top:215px;width:298px;height:672px;background:#ffffff"></div>

<!-- viewport -->
<div class="a" style="left:303px;top:144px;width:1037px;height:743px;background:#f9f9fb;border-top:1px solid #c9cbcf;border-left:1px solid #c9cbcf"></div>

<svg style="left:266px;top:146px" width="14" height="14" viewBox="0 0 14 14"><rect x="4" y="2" width="5" height="6" fill="none" stroke="#555" stroke-width="1.2"/><line x1="2" y1="8.5" x2="11" y2="8.5" stroke="#555" stroke-width="1.3"/><line x1="6.5" y1="8.5" x2="6.5" y2="12" stroke="#555" stroke-width="1.3"/></svg>
<svg style="left:283px;top:146px" width="14" height="14" viewBox="0 0 14 14"><line x1="2.5" y1="3" x2="9.5" y2="10" stroke="#555" stroke-width="1.4"/><line x1="9.5" y1="3" x2="2.5" y2="10" stroke="#555" stroke-width="1.4"/></svg>
<svg style="left:1px;top:171px" width="18" height="18" viewBox="0 0 18 18"><rect x="6.5" y="1.5" width="5" height="3.5" fill="#8a8a8a" stroke="#666" stroke-width="0.5"/><rect x="2.5" y="8" width="5" height="3.5" fill="#8a8a8a" stroke="#666" stroke-width="0.5"/><rect x="10" y="8" width="5" height="3.5" fill="#8a8a8a" stroke="#666" stroke-width="0.5"/><g stroke="#18c018" stroke-width="1.2" fill="none"><polyline points="9,5 9,6.5 4.5,6.5 4.5,8"/><polyline points="9,6.5 12.5,6.5 12.5,8"/><polyline points="4.5,11.5 4.5,13.5 1.5,13.5 M4.5,13.5 7.5,13.5"/><polyline points="12.5,11.5 12.5,13.5 9.5,13.5 M12.5,13.5 15.5,13.5"/></g></svg>
<svg style="left:3px;top:197px" width="10" height="10" viewBox="0 0 10 10"><rect x="0.5" y="0.5" width="8" height="8" rx="1.5" fill="#2a5ab8"/><rect x="2" y="2.5" width="2" height="1" fill="#fff"/><rect x="2" y="5" width="2" height="1" fill="#fff"/><rect x="5" y="2.5" width="2" height="4" fill="#fff" opacity="0.85"/></svg>
<svg style="left:228px;top:199px" width="10" height="8" viewBox="0 0 10 8"><rect x="1" y="2" width="3" height="5" fill="#7a7a7a"/><rect x="5.5" y="2" width="3" height="5" fill="#7a7a7a"/><rect x="1.8" y="0.5" width="1.6" height="2" fill="#7a7a7a"/><rect x="6.3" y="0.5" width="1.6" height="2" fill="#7a7a7a"/><rect x="3.5" y="3" width="2.5" height="1.5" fill="#7a7a7a"/></svg>
<svg style="left:244px;top:199px" width="11" height="8" viewBox="0 0 11 8"><polygon points="0.5,1 10.5,1 10.5,3 8,3 8,5 6.5,5 6.5,7 4.5,7 4.5,5 3,5 3,3 0.5,3" fill="#6a6a6a"/></svg>
<div class="a" style="left:260px;top:194px;width:1px;height:14px;background:#e2e3e6"></div>
<svg style="left:265px;top:198px" width="10" height="10" viewBox="0 0 10 10"><line x1="1" y1="1" x2="9" y2="1" stroke="#7a7a7a" stroke-width="1"/><polygon points="1.5,2 8.5,2 8.5,3.5 6,5 6,9 4,9 4,5 1.5,3.5" fill="#8a8a8a"/><rect x="3" y="2.3" width="4" height="2" fill="#d8f8d0"/></svg>
<svg style="left:281px;top:199px" width="11" height="8" viewBox="0 0 11 8"><polygon points="0.5,1 10.5,1 10.5,3 8,3 8,5 6.5,5 6.5,7 4.5,7 4.5,5 3,5 3,3 0.5,3" fill="#6a6a6a"/></svg>
<div class="a" style="left:5px;top:221px;width:9px;height:9px;border:1px solid #8f9398;background:linear-gradient(#fff,#e4e6ea);border-radius:1px"></div>
<div class="a" style="left:7px;top:225px;width:5px;height:1px;background:#3b5a9a"></div>
<div class="a" style="left:15px;top:225px;width:7px;height:0;border-top:1px dotted #777"></div>
<svg style="left:0;top:0" width="1" height="1"><line x1="23.5" y1="228.5" x2="33.5" y2="218.5" stroke="#0b6e1f" stroke-width="2.2" stroke-linecap="round"/></svg>
<div class="a" style="left:29px;top:232px;width:0;height:298px;border-left:1px dotted #777"></div>
<div class="a" style="left:30px;top:243px;width:10px;height:0;border-top:1px dotted #777"></div>
<div class="a" style="left:43px;top:236px;width:12px;height:12px;background:#fff;border-top:2px solid #111;border-left:2px solid #111;border-right:1px solid #ddd;border-bottom:1px solid #ddd"></div>
<svg style="left:43px;top:236px" width="12" height="12"><polyline points="3.2,5.8 5.3,9 9.8,3.2" fill="none" stroke="#000" stroke-width="2"/></svg>
<svg style="left:74px;top:236px" width="13" height="13"><polygon points="0,4 4,0 13,0 9,4" fill="#68dcc0"/><rect x="0" y="4" width="9" height="9" fill="#3aabab"/><polygon points="9,4 13,0 13,9 9,13" fill="#2f8f96"/></svg>
<div class="tr" style="left:94px;top:235px;font-weight:bold;">Base</div>
<div class="a" style="left:92px;top:248px;width:32px;height:1px;background:#22dd22"></div>
<div class="a" style="left:30px;top:261px;width:10px;height:0;border-top:1px dotted #777"></div>
<div class="a" style="left:43px;top:254px;width:12px;height:12px;background:#fff;border-top:2px solid #111;border-left:2px solid #111;border-right:1px solid #ddd;border-bottom:1px solid #ddd"></div>
<svg style="left:43px;top:254px" width="12" height="12"><polyline points="3.2,5.8 5.3,9 9.8,3.2" fill="none" stroke="#000" stroke-width="2"/></svg>
<svg style="left:74px;top:254px" width="13" height="13"><polygon points="0,4 4,0 13,0 9,4" fill="#68dcc0"/><rect x="0" y="4" width="9" height="9" fill="#3aabab"/><polygon points="9,4 13,0 13,9 9,13" fill="#2f8f96"/></svg>
<div class="tr" style="left:94px;top:253px;">LezajZgoraj</div>
<div class="a" style="left:30px;top:279px;width:10px;height:0;border-top:1px dotted #777"></div>
<div class="a" style="left:43px;top:272px;width:12px;height:12px;background:#fff;border-top:2px solid #111;border-left:2px solid #111;border-right:1px solid #ddd;border-bottom:1px solid #ddd"></div>
<svg style="left:43px;top:272px" width="12" height="12"><polyline points="3.2,5.8 5.3,9 9.8,3.2" fill="none" stroke="#000" stroke-width="2"/></svg>
<svg style="left:74px;top:272px" width="13" height="13"><polygon points="0,4 4,0 13,0 9,4" fill="#68dcc0"/><rect x="0" y="4" width="9" height="9" fill="#3aabab"/><polygon points="9,4 13,0 13,9 9,13" fill="#2f8f96"/></svg>
<div class="tr" style="left:94px;top:271px;">LezajZgoraj.1</div>
<div class="a" style="left:30px;top:297px;width:10px;height:0;border-top:1px dotted #777"></div>
<div class="a" style="left:25px;top:293px;width:9px;height:9px;border:1px solid #8f9398;background:linear-gradient(#fff,#e4e6ea)"></div>
<div class="a" style="left:27px;top:297px;width:5px;height:1px;background:#3b5a9a"></div>
<div class="a" style="left:29px;top:295px;width:1px;height:5px;background:#3b5a9a"></div>
<div class="a" style="left:43px;top:290px;width:12px;height:12px;background:#fff;border-top:2px solid #111;border-left:2px solid #111;border-right:1px solid #ddd;border-bottom:1px solid #ddd"></div>
<svg style="left:74px;top:290px" width="9" height="9"><polygon points="0,4 4,0 9,0 5,4" fill="#68dcc0"/><rect x="0" y="4" width="5" height="5" fill="#3aabab"/><polygon points="5,4 9,0 9,5 5,9" fill="#2f8f96"/></svg>
<svg style="left:79px;top:295px" width="9" height="9"><polygon points="0,4 4,0 9,0 5,4" fill="#c4c8ff"/><rect x="0" y="4" width="5" height="5" fill="#8f90ee"/><polygon points="5,4 9,0 9,5 5,9" fill="#6c6fd8"/></svg>
<div class="tr" style="left:94px;top:289px;">Ohisje</div>
<div class="a" style="left:30px;top:315px;width:10px;height:0;border-top:1px dotted #777"></div>
<div class="a" style="left:43px;top:308px;width:12px;height:12px;background:#fff;border-top:2px solid #111;border-left:2px solid #111;border-right:1px solid #ddd;border-bottom:1px solid #ddd"></div>
<svg style="left:43px;top:308px" width="12" height="12"><polyline points="3.2,5.8 5.3,9 9.8,3.2" fill="none" stroke="#000" stroke-width="2"/></svg>
<svg style="left:74px;top:308px" width="13" height="13"><polygon points="0,4 4,0 13,0 9,4" fill="#68dcc0"/><rect x="0" y="4" width="9" height="9" fill="#3aabab"/><polygon points="9,4 13,0 13,9 9,13" fill="#2f8f96"/></svg>
<div class="tr" style="left:94px;top:307px;">PogonskiZobnik</div>
<div class="a" style="left:30px;top:333px;width:10px;height:0;border-top:1px dotted #777"></div>
<div class="a" style="left:43px;top:326px;width:12px;height:12px;background:#fff;border-top:2px solid #111;border-left:2px solid #111;border-right:1px solid #ddd;border-bottom:1px solid #ddd"></div>
<svg style="left:43px;top:326px" width="12" height="12"><polyline points="3.2,5.8 5.3,9 9.8,3.2" fill="none" stroke="#000" stroke-width="2"/></svg>
<svg style="left:74px;top:326px" width="13" height="13"><polygon points="0,4 4,0 13,0 9,4" fill="#68dcc0"/><rect x="0" y="4" width="9" height="9" fill="#3aabab"/><polygon points="9,4 13,0 13,9 9,13" fill="#2f8f96"/></svg>
<div class="tr" style="left:94px;top:325px;">motor_nosilec</div>
<div class="a" style="left:30px;top:351px;width:10px;height:0;border-top:1px dotted #777"></div>
<div class="a" style="left:43px;top:344px;width:12px;height:12px;background:#fff;border-top:2px solid #111;border-left:2px solid #111;border-right:1px solid #ddd;border-bottom:1px solid #ddd"></div>
<svg style="left:74px;top:344px" width="13" height="13"><polygon points="0,4 4,0 13,0 9,4" fill="#68dcc0"/><rect x="0" y="4" width="9" height="9" fill="#3aabab"/><polygon points="9,4 13,0 13,9 9,13" fill="#2f8f96"/></svg>
<div class="tr" style="left:94px;top:343px;">napajalnik</div>
<div class="a" style="left:30px;top:369px;width:10px;height:0;border-top:1px dotted #777"></div>
<div class="a" style="left:43px;top:362px;width:12px;height:12px;background:#fff;border-top:2px solid #111;border-left:2px solid #111;border-right:1px solid #ddd;border-bottom:1px solid #ddd"></div>
<svg style="left:43px;top:362px" width="12" height="12"><polyline points="3.2,5.8 5.3,9 9.8,3.2" fill="none" stroke="#000" stroke-width="2"/></svg>
<svg style="left:74px;top:362px" width="13" height="13"><polygon points="0,4 4,0 13,0 9,4" fill="#68dcc0"/><rect x="0" y="4" width="9" height="9" fill="#3aabab"/><polygon points="9,4 13,0 13,9 9,13" fill="#2f8f96"/></svg>
<div class="tr" style="left:94px;top:361px;">nosilec1</div>
<div class="a" style="left:30px;top:387px;width:10px;height:0;border-top:1px dotted #777"></div>
<div class="a" style="left:43px;top:380px;width:12px;height:12px;background:#fff;border-top:2px solid #111;border-left:2px solid #111;border-right:1px solid #ddd;border-bottom:1px solid #ddd"></div>
<svg style="left:43px;top:380px" width="12" height="12"><polyline points="3.2,5.8 5.3,9 9.8,3.2" fill="none" stroke="#000" stroke-width="2"/></svg>
<svg style="left:74px;top:380px" width="13" height="13"><polygon points="0,4 4,0 13,0 9,4" fill="#68dcc0"/><rect x="0" y="4" width="9" height="9" fill="#3aabab"/><polygon points="9,4 13,0 13,9 9,13" fill="#2f8f96"/></svg>
<div class="tr" style="left:94px;top:379px;">nosilec1.1</div>
<div class="a" style="left:30px;top:405px;width:10px;height:0;border-top:1px dotted #777"></div>
<div class="a" style="left:43px;top:398px;width:12px;height:12px;background:#fff;border-top:2px solid #111;border-left:2px solid #111;border-right:1px solid #ddd;border-bottom:1px solid #ddd"></div>
<svg style="left:74px;top:398px" width="13" height="13"><polygon points="0,4 4,0 13,0 9,4" fill="#68dcc0"/><rect x="0" y="4" width="9" height="9" fill="#3aabab"/><polygon points="9,4 13,0 13,9 9,13" fill="#2f8f96"/></svg>
<div class="tr" style="left:94px;top:397px;">nosilecLS</div>
<div class="a" style="left:30px;top:423px;width:10px;height:0;border-top:1px dotted #777"></div>
<div class="a" style="left:43px;top:416px;width:12px;height:12px;background:#fff;border-top:2px solid #111;border-left:2px solid #111;border-right:1px solid #ddd;border-bottom:1px solid #ddd"></div>
<svg style="left:43px;top:416px" width="12" height="12"><polyline points="3.2,5.8 5.3,9 9.8,3.2" fill="none" stroke="#000" stroke-width="2"/></svg>
<svg style="left:65px;top:421px" width="8" height="8"><rect width="8" height="8" fill="#111"/><rect x="1" y="0.5" width="6" height="3.5" fill="#b9b6e6"/><rect x="4.5" y="5" width="1.5" height="3" fill="#b9b6e6"/></svg>
<svg style="left:74px;top:416px" width="13" height="13"><polygon points="0,4 4,0 13,0 9,4" fill="#68dcc0"/><rect x="0" y="4" width="9" height="9" fill="#3aabab"/><polygon points="9,4 13,0 13,9 9,13" fill="#2f8f96"/></svg>
<div class="tr" style="left:94px;top:415px;">p1</div>
<div class="a" style="left:30px;top:441px;width:10px;height:0;border-top:1px dotted #777"></div>
<div class="a" style="left:43px;top:434px;width:12px;height:12px;background:#fff;border-top:2px solid #111;border-left:2px solid #111;border-right:1px solid #ddd;border-bottom:1px solid #ddd"></div>
<svg style="left:43px;top:434px" width="12" height="12"><polyline points="3.2,5.8 5.3,9 9.8,3.2" fill="none" stroke="#000" stroke-width="2"/></svg>
<svg style="left:74px;top:434px" width="13" height="13"><polygon points="0,4 4,0 13,0 9,4" fill="#68dcc0"/><rect x="0" y="4" width="9" height="9" fill="#3aabab"/><polygon points="9,4 13,0 13,9 9,13" fill="#2f8f96"/></svg>
<div class="tr" style="left:94px;top:433px;">podpokrov1</div>
<div class="a" style="left:30px;top:459px;width:10px;height:0;border-top:1px dotted #777"></div>
<div class="a" style="left:43px;top:452px;width:12px;height:12px;background:#fff;border-top:2px solid #111;border-left:2px solid #111;border-right:1px solid #ddd;border-bottom:1px solid #ddd"></div>
<svg style="left:43px;top:452px" width="12" height="12"><polyline points="3.2,5.8 5.3,9 9.8,3.2" fill="none" stroke="#000" stroke-width="2"/></svg>
<svg style="left:74px;top:452px" width="13" height="13"><polygon points="0,4 4,0 13,0 9,4" fill="#68dcc0"/><rect x="0" y="4" width="9" height="9" fill="#3aabab"/><polygon points="9,4 13,0 13,9 9,13" fill="#2f8f96"/></svg>
<div class="tr" style="left:94px;top:451px;">pokrov1</div>
<div class="a" style="left:30px;top:477px;width:10px;height:0;border-top:1px dotted #777"></div>
<div class="a" style="left:43px;top:470px;width:12px;height:12px;background:#fff;border-top:2px solid #111;border-left:2px solid #111;border-right:1px solid #ddd;border-bottom:1px solid #ddd"></div>
<svg style="left:43px;top:470px" width="12" height="12"><polyline points="3.2,5.8 5.3,9 9.8,3.2" fill="none" stroke="#000" stroke-width="2"/></svg>
<svg style="left:74px;top:470px" width="13" height="13"><polygon points="0,4 4,0 13,0 9,4" fill="#68dcc0"/><rect x="0" y="4" width="9" height="9" fill="#3aabab"/><polygon points="9,4 13,0 13,9 9,13" fill="#2f8f96"/></svg>
<div class="tr" style="left:94px;top:469px;">pokrov1.1</div>
<div class="a" style="left:30px;top:495px;width:10px;height:0;border-top:1px dotted #777"></div>
<div class="a" style="left:25px;top:491px;width:9px;height:9px;border:1px solid #8f9398;background:linear-gradient(#fff,#e4e6ea)"></div>
<div class="a" style="left:27px;top:495px;width:5px;height:1px;background:#3b5a9a"></div>
<div class="a" style="left:29px;top:493px;width:1px;height:5px;background:#3b5a9a"></div>
<div class="a" style="left:43px;top:488px;width:12px;height:12px;background:#fff;border-top:2px solid #111;border-left:2px solid #111;border-right:1px solid #ddd;border-bottom:1px solid #ddd"></div>
<svg style="left:43px;top:488px" width="12" height="12"><polyline points="3.2,5.8 5.3,9 9.8,3.2" fill="none" stroke="#000" stroke-width="2"/></svg>
<svg style="left:74px;top:488px" width="9" height="9"><polygon points="0,4 4,0 9,0 5,4" fill="#68dcc0"/><rect x="0" y="4" width="5" height="5" fill="#3aabab"/><polygon points="5,4 9,0 9,5 5,9" fill="#2f8f96"/></svg>
<svg style="left:79px;top:493px" width="9" height="9"><polygon points="0,4 4,0 9,0 5,4" fill="#c4c8ff"/><rect x="0" y="4" width="5" height="5" fill="#8f90ee"/><polygon points="5,4 9,0 9,5 5,9" fill="#6c6fd8"/></svg>
<div class="tr" style="left:94px;top:487px;">stebri</div>
<div class="a" style="left:30px;top:513px;width:10px;height:0;border-top:1px dotted #777"></div>
<div class="a" style="left:43px;top:506px;width:12px;height:12px;background:#fff;border-top:2px solid #111;border-left:2px solid #111;border-right:1px solid #ddd;border-bottom:1px solid #ddd"></div>
<svg style="left:74px;top:506px" width="13" height="13"><polygon points="0,4 4,0 13,0 9,4" fill="#68dcc0"/><rect x="0" y="4" width="9" height="9" fill="#3aabab"/><polygon points="9,4 13,0 13,9 9,13" fill="#2f8f96"/></svg>
<div class="tr" style="left:94px;top:505px;">vtikac</div>
<div class="a" style="left:30px;top:531px;width:10px;height:0;border-top:1px dotted #777"></div>
<div class="a" style="left:43px;top:524px;width:12px;height:12px;background:#fff;border-top:2px solid #111;border-left:2px solid #111;border-right:1px solid #ddd;border-bottom:1px solid #ddd"></div>
<svg style="left:65px;top:529px" width="8" height="8"><rect width="8" height="8" fill="#111"/><rect x="1" y="0.5" width="6" height="3.5" fill="#b9b6e6"/><rect x="4.5" y="5" width="1.5" height="3" fill="#b9b6e6"/></svg>
<div class="a" style="left:74px;top:524px;width:13px;height:13px;border:2px solid #19c019;background:#fff"></div>
<div class="tr" style="left:94px;top:523px;font-weight:bold;">w1</div>
<div class="a" style="left:92px;top:536px;width:23px;height:1px;background:#22dd22"></div>
<svg style="left:0;top:0" width="1340" height="887" viewBox="0 0 1340 887">
<defs>
<linearGradient id="gTopCyan" x1="480" y1="0" x2="1268" y2="0" gradientUnits="userSpaceOnUse"><stop offset="0" stop-color="#5aa9aa"/><stop offset="0.5" stop-color="#4a9496"/><stop offset="1" stop-color="#367a7c"/></linearGradient>
<linearGradient id="gFrontCyan" x1="641" y1="0" x2="1268" y2="0" gradientUnits="userSpaceOnUse"><stop offset="0" stop-color="#4fcfd4"/><stop offset="0.6" stop-color="#62e4ea"/><stop offset="1" stop-color="#7ef6fa"/></linearGradient>
<linearGradient id="gRed" x1="801" y1="0" x2="950" y2="0" gradientUnits="userSpaceOnUse"><stop offset="0" stop-color="#8e2a2a"/><stop offset="0.25" stop-color="#c77070"/><stop offset="0.55" stop-color="#7a1515"/><stop offset="0.85" stop-color="#e0a0a0"/><stop offset="1" stop-color="#b05050"/></linearGradient>
<linearGradient id="gSilver" x1="794" y1="0" x2="973" y2="0" gradientUnits="userSpaceOnUse"><stop offset="0" stop-color="#3a3a3a"/><stop offset="0.3" stop-color="#9a9a9a"/><stop offset="0.7" stop-color="#b5b5b8"/><stop offset="0.9" stop-color="#f0f0f0"/><stop offset="1" stop-color="#888"/></linearGradient>
<linearGradient id="gGear" x1="765" y1="0" x2="975" y2="0" gradientUnits="userSpaceOnUse"><stop offset="0" stop-color="#6a6a6c"/><stop offset="0.5" stop-color="#9a9a9c"/><stop offset="1" stop-color="#7a7a7c"/></linearGradient>
<pattern id="pTeeth" width="7" height="60" patternUnits="userSpaceOnUse" patternTransform="skewX(-8)"><rect width="7" height="60" fill="#a8a8aa"/><rect x="0" width="2" height="60" fill="#4a4a4c"/><rect x="4" width="1" height="60" fill="#ececec"/></pattern>
<pattern id="pTeethM" width="6" height="60" patternUnits="userSpaceOnUse" patternTransform="skewX(-8)"><rect width="6" height="60" fill="#e040e0"/><rect x="0" width="2" height="60" fill="#8a208a"/><rect x="4" width="1" height="60" fill="#ff90ff"/></pattern>
<clipPath id="vp"><rect x="304" y="145" width="1036" height="742"/></clipPath>
</defs>
<g clip-path="url(#vp)">
<polygon points="372,689 542,698 677,704.5 893,716 893,733 858,740 676,730 597,748 538,728 461,722" fill="#c2c3c5" />
<polygon points="1113,742 1175,755 1172,779 1113,758" fill="#c2c3c5" />
<polygon points="1050,547 1057.11,547.09 1041.11,752.54 1034,752" fill="#6e6e72" /><polygon points="1057.11,547.09 1064.22,547.18 1048.22,753.08 1041.11,752.54" fill="#8a8a8e" /><polygon points="1064.22,547.18 1069.75,547.25 1053.75,753.5 1048.22,753.08" fill="#7a7a7e" /><polygon points="1069.75,547.25 1076.86,547.34 1060.86,754.04 1053.75,753.5" fill="#6a6a6e" /><polygon points="1076.86,547.34 1090.29,547.51 1074.29,755.06 1060.86,754.04" fill="#8c8c90" /><polygon points="1090.29,547.51 1102.14,547.66 1086.14,755.96 1074.29,755.06" fill="#8a8a8e" /><polygon points="1102.14,547.66 1108.46,547.74 1092.46,756.44 1086.14,755.96" fill="#9a9a9e" /><polygon points="1108.46,547.74 1115.57,547.83 1099.57,756.98 1092.46,756.44" fill="#929296" /><polygon points="1115.57,547.83 1129.0,548.0 1113.0,758.0 1099.57,756.98" fill="#8a8a8e" /><line x1="1056.6" y1="547.1" x2="1040.6" y2="752.5" stroke="#d4d4d6" stroke-width="1.1"/><line x1="1064.2" y1="547.2" x2="1048.2" y2="753.1" stroke="#d4d4d6" stroke-width="1.1"/><line x1="1069.8" y1="547.2" x2="1053.8" y2="753.5" stroke="#d4d4d6" stroke-width="1.1"/><line x1="1076.5" y1="547.3" x2="1060.5" y2="754.0" stroke="#d4d4d6" stroke-width="1.1"/><line x1="1089.9" y1="547.5" x2="1073.9" y2="755.0" stroke="#d4d4d6" stroke-width="1.1"/><line x1="1093.1" y1="547.5" x2="1077.1" y2="755.3" stroke="#d4d4d6" stroke-width="1.1"/><line x1="1102.1" y1="547.7" x2="1086.1" y2="756.0" stroke="#d4d4d6" stroke-width="1.1"/><line x1="1108.1" y1="547.7" x2="1092.1" y2="756.4" stroke="#d4d4d6" stroke-width="1.1"/><line x1="1115.2" y1="547.8" x2="1099.2" y2="757.0" stroke="#d4d4d6" stroke-width="1.1"/><line x1="1081.6" y1="547.4" x2="1065.6" y2="754.4" stroke="#2c2c30" stroke-width="1.1"/>
<polygon points="1044.5,687 1117,689 1113,758 1034,752" fill="#ffffff" opacity="0.22"/>
<polygon points="1188.5,550 1195.565,550.27 1178.02,779.54 1171,779" fill="#6a6a6e" /><polygon points="1195.565,550.27 1202.63,550.54 1185.04,780.08 1178.02,779.54" fill="#8a8a8e" /><polygon points="1202.63,550.54 1208.125,550.75 1190.5,780.5 1185.04,780.08" fill="#7a7a7e" /><polygon points="1208.125,550.75 1215.19,551.02 1197.52,781.04 1190.5,780.5" fill="#646468" /><polygon points="1215.19,551.02 1228.535,551.53 1210.78,782.06 1197.52,781.04" fill="#a4a4a8" /><polygon points="1228.535,551.53 1240.31,551.98 1222.48,782.96 1210.78,782.06" fill="#a0a0a4" /><polygon points="1240.31,551.98 1246.59,552.22 1228.72,783.44 1222.48,782.96" fill="#909094" /><polygon points="1246.59,552.22 1253.655,552.49 1235.74,783.98 1228.72,783.44" fill="#98989c" /><polygon points="1253.655,552.49 1267.0,553.0 1249.0,785.0 1235.74,783.98" fill="#a8a8ac" /><line x1="1195.0" y1="550.2" x2="1177.5" y2="779.5" stroke="#d4d4d6" stroke-width="1.1"/><line x1="1202.6" y1="550.5" x2="1185.0" y2="780.1" stroke="#d4d4d6" stroke-width="1.1"/><line x1="1208.1" y1="550.8" x2="1190.5" y2="780.5" stroke="#d4d4d6" stroke-width="1.1"/><line x1="1214.8" y1="551.0" x2="1197.1" y2="781.0" stroke="#d4d4d6" stroke-width="1.1"/><line x1="1228.1" y1="551.5" x2="1210.4" y2="782.0" stroke="#d4d4d6" stroke-width="1.1"/><line x1="1231.3" y1="551.6" x2="1213.5" y2="782.3" stroke="#d4d4d6" stroke-width="1.1"/><line x1="1240.3" y1="552.0" x2="1222.5" y2="783.0" stroke="#d4d4d6" stroke-width="1.1"/><line x1="1246.2" y1="552.2" x2="1228.3" y2="783.4" stroke="#d4d4d6" stroke-width="1.1"/><line x1="1253.3" y1="552.5" x2="1235.3" y2="784.0" stroke="#d4d4d6" stroke-width="1.1"/><line x1="1229.3" y1="551.6" x2="1211.6" y2="782.1" stroke="#2c2c30" stroke-width="1.1"/>
<polygon points="478.5,490.5 485.43,491.715 467.93,722.54 461,722" fill="#808084" /><polygon points="485.43,491.715 492.36,492.93 474.86,723.08 467.93,722.54" fill="#8a8a8e" /><polygon points="492.36,492.93 497.75,493.875 480.25,723.5 474.86,723.08" fill="#7c7c80" /><polygon points="497.75,493.875 504.68,495.09 487.18,724.04 480.25,723.5" fill="#88888c" /><polygon points="504.68,495.09 517.0,497.25 499.5,725.0 487.18,724.04" fill="#5e5e62" /><polygon points="517.0,497.25 520.85,497.925 503.35,725.3 499.5,725.0" fill="#6a6a6e" /><polygon points="520.85,497.925 529.32,499.41 511.82,725.96 503.35,725.3" fill="#58585c" /><polygon points="529.32,499.41 535.48,500.49 517.98,726.44 511.82,725.96" fill="#7a7a7e" /><polygon points="535.48,500.49 542.41,501.705 524.91,726.98 517.98,726.44" fill="#808084" /><polygon points="542.41,501.705 555.5,504.0 538.0,728.0 524.91,726.98" fill="#58585c" /><line x1="484.9" y1="491.6" x2="467.4" y2="722.5" stroke="#d4d4d6" stroke-width="1.1"/><line x1="492.4" y1="492.9" x2="474.9" y2="723.1" stroke="#d4d4d6" stroke-width="1.1"/><line x1="497.8" y1="493.9" x2="480.2" y2="723.5" stroke="#d4d4d6" stroke-width="1.1"/><line x1="504.3" y1="495.0" x2="486.8" y2="724.0" stroke="#d4d4d6" stroke-width="1.1"/><line x1="517.4" y1="497.3" x2="499.9" y2="725.0" stroke="#d4d4d6" stroke-width="1.1"/><line x1="520.5" y1="497.9" x2="503.0" y2="725.3" stroke="#d4d4d6" stroke-width="1.1"/><line x1="529.3" y1="499.4" x2="511.8" y2="726.0" stroke="#d4d4d6" stroke-width="1.1"/><line x1="535.1" y1="500.4" x2="517.6" y2="726.4" stroke="#d4d4d6" stroke-width="1.1"/><line x1="542.0" y1="501.6" x2="524.5" y2="727.0" stroke="#d4d4d6" stroke-width="1.1"/><line x1="518.5" y1="497.5" x2="501.0" y2="725.1" stroke="#2c2c30" stroke-width="1.1"/>
<polygon points="614.5,516.5 621.475,517.13 604.02,748.54 597,748" fill="#7a7a7e" /><polygon points="621.475,517.13 628.45,517.76 611.04,749.08 604.02,748.54" fill="#8c8c8e" /><polygon points="628.45,517.76 633.875,518.25 616.5,749.5 611.04,749.08" fill="#7e7e82" /><polygon points="633.875,518.25 640.85,518.88 623.52,750.04 616.5,749.5" fill="#8a8a8c" /><polygon points="640.85,518.88 653.25,520.0 636.0,751.0 623.52,750.04" fill="#6e6e72" /><polygon points="653.25,520.0 657.125,520.35 639.9,751.3 636.0,751.0" fill="#6e6e72" /><polygon points="657.125,520.35 665.65,521.12 648.48,751.96 639.9,751.3" fill="#6e6e72" /><polygon points="665.65,521.12 671.85,521.68 654.72,752.44 648.48,751.96" fill="#909092" /><polygon points="671.85,521.68 678.825,522.31 661.74,752.98 654.72,752.44" fill="#969698" /><polygon points="678.825,522.31 692.0,523.5 675.0,754.0 661.74,752.98" fill="#727276" /><line x1="620.9" y1="517.1" x2="603.5" y2="748.5" stroke="#d4d4d6" stroke-width="1.1"/><line x1="628.5" y1="517.8" x2="611.0" y2="749.1" stroke="#d4d4d6" stroke-width="1.1"/><line x1="633.9" y1="518.2" x2="616.5" y2="749.5" stroke="#d4d4d6" stroke-width="1.1"/><line x1="640.5" y1="518.8" x2="623.1" y2="750.0" stroke="#d4d4d6" stroke-width="1.1"/><line x1="653.6" y1="520.0" x2="636.4" y2="751.0" stroke="#d4d4d6" stroke-width="1.1"/><line x1="656.7" y1="520.3" x2="639.5" y2="751.3" stroke="#d4d4d6" stroke-width="1.1"/><line x1="665.6" y1="521.1" x2="648.5" y2="752.0" stroke="#d4d4d6" stroke-width="1.1"/><line x1="671.5" y1="521.6" x2="654.3" y2="752.4" stroke="#d4d4d6" stroke-width="1.1"/><line x1="678.4" y1="522.3" x2="661.4" y2="753.0" stroke="#d4d4d6" stroke-width="1.1"/><line x1="654.8" y1="520.1" x2="637.6" y2="751.1" stroke="#2c2c30" stroke-width="1.1"/>
<linearGradient id="gLegL" x1="0" y1="495" x2="0" y2="750" gradientUnits="userSpaceOnUse"><stop offset="0" stop-color="#fff" stop-opacity="0"/><stop offset="1" stop-color="#fff" stop-opacity="0.16"/></linearGradient>
<polygon points="478.5,490.5 555.5,504 538,728 461,722" fill="url(#gLegL)" />
<polygon points="614.5,516.5 692,523.5 675,754 597,748" fill="url(#gLegL)" />
<polygon points="480,471 648,480 1040,501 1147,512 1257,533 1268,535 641,502" fill="url(#gTopCyan)" />
<polygon points="480,472 641,502 641,520 478,490" fill="#66c1c2" />
<polygon points="641,502 1268,535 1268,553 641,520" fill="url(#gFrontCyan)" />
<polyline points="480,471 648,480 1040,501 1147,512 1257,533 1268,535 1268,553 641,520 478,490 480,471 641,502 1268,535" fill="none" stroke="#00f0ff" stroke-width="1.2"/>
<line x1="641" y1="502" x2="641" y2="520" stroke="#00f0ff" stroke-width="1"/>
<polygon points="735,526 1088,545 1088,551 905,540 774,534" fill="#a8a458" />
<polyline points="735,526 774,534 905,540 1088,551" fill="none" stroke="#f0f000" stroke-width="1"/>
<line x1="774" y1="528" x2="774" y2="534" stroke="#f0f000" stroke-width="1"/>
<polygon points="797,533 946,542 946,553 905,551.9 797,542.4" fill="url(#gRed)" />
<polygon points="766,535.6 797,539 905,551.3 975,553 975,588 905,585.4 840,579.5 764.5,571" fill="#acacb0" />
<line x1="770.5" y1="536.8" x2="768.0" y2="570.4" stroke="#3a3a3e" stroke-width="1.7"/>
<line x1="775.9" y1="537.2" x2="773.4" y2="571.0" stroke="#3a3a3e" stroke-width="1.7"/>
<line x1="781.3" y1="537.7" x2="778.8" y2="571.6" stroke="#3a3a3e" stroke-width="1.7"/>
<line x1="786.7" y1="538.1" x2="784.2" y2="572.2" stroke="#3a3a3e" stroke-width="1.7"/>
<line x1="792.1" y1="538.6" x2="789.6" y2="572.8" stroke="#3a3a3e" stroke-width="1.7"/>
<line x1="797.5" y1="539.0" x2="795.0" y2="573.4" stroke="#3a3a3e" stroke-width="1.7"/>
<line x1="802.9" y1="539.5" x2="800.4" y2="574.0" stroke="#e6e6ee" stroke-width="1.4"/>
<line x1="808.3" y1="539.9" x2="805.8" y2="574.6" stroke="#5a5a5e" stroke-width="1.4"/>
<line x1="813.7" y1="540.4" x2="811.2" y2="575.3" stroke="#e6e6ee" stroke-width="1.4"/>
<line x1="819.1" y1="540.8" x2="816.6" y2="575.9" stroke="#5a5a5e" stroke-width="1.4"/>
<line x1="824.5" y1="541.3" x2="822.0" y2="576.5" stroke="#e6e6ee" stroke-width="1.4"/>
<line x1="829.9" y1="541.7" x2="827.4" y2="577.1" stroke="#5a5a5e" stroke-width="1.4"/>
<line x1="835.3" y1="542.2" x2="832.8" y2="577.7" stroke="#e6e6ee" stroke-width="1.4"/>
<line x1="840.7" y1="542.6" x2="838.2" y2="578.3" stroke="#5a5a5e" stroke-width="1.4"/>
<line x1="846.1" y1="543.1" x2="843.6" y2="578.8" stroke="#e6e6ee" stroke-width="1.4"/>
<line x1="851.5" y1="543.5" x2="849.0" y2="579.3" stroke="#5a5a5e" stroke-width="1.4"/>
<line x1="856.9" y1="544.0" x2="854.4" y2="579.8" stroke="#3a3a3e" stroke-width="1.7"/>
<line x1="862.3" y1="544.4" x2="859.8" y2="580.3" stroke="#3a3a3e" stroke-width="1.7"/>
<line x1="867.7" y1="544.9" x2="865.2" y2="580.8" stroke="#3a3a3e" stroke-width="1.7"/>
<line x1="873.1" y1="545.3" x2="870.6" y2="581.3" stroke="#3a3a3e" stroke-width="1.7"/>
<line x1="878.5" y1="545.8" x2="876.0" y2="581.8" stroke="#3a3a3e" stroke-width="1.7"/>
<line x1="883.9" y1="546.2" x2="881.4" y2="582.3" stroke="#3a3a3e" stroke-width="1.7"/>
<line x1="889.3" y1="546.7" x2="886.8" y2="582.7" stroke="#3a3a3e" stroke-width="1.7"/>
<line x1="894.7" y1="547.1" x2="892.2" y2="583.2" stroke="#3a3a3e" stroke-width="1.7"/>
<line x1="900.1" y1="547.6" x2="897.6" y2="583.7" stroke="#3a3a3e" stroke-width="1.7"/>
<line x1="905.5" y1="548.0" x2="903.0" y2="584.2" stroke="#3a3a3e" stroke-width="1.7"/>
<line x1="910.9" y1="548.5" x2="908.4" y2="584.5" stroke="#3a3a3e" stroke-width="1.7"/>
<line x1="916.3" y1="548.9" x2="913.8" y2="584.7" stroke="#3a3a3e" stroke-width="1.7"/>
<line x1="921.7" y1="549.4" x2="919.2" y2="584.9" stroke="#3a3a3e" stroke-width="1.7"/>
<line x1="927.1" y1="549.8" x2="924.6" y2="585.1" stroke="#3a3a3e" stroke-width="1.7"/>
<line x1="932.5" y1="550.3" x2="930.0" y2="585.3" stroke="#3a3a3e" stroke-width="1.7"/>
<line x1="937.9" y1="550.7" x2="935.4" y2="585.5" stroke="#3a3a3e" stroke-width="1.7"/>
<line x1="943.3" y1="551.2" x2="940.8" y2="585.7" stroke="#3a3a3e" stroke-width="1.7"/>
<line x1="948.7" y1="551.6" x2="946.2" y2="585.9" stroke="#3a3a3e" stroke-width="1.7"/>
<line x1="954.1" y1="552.1" x2="951.6" y2="586.1" stroke="#3a3a3e" stroke-width="1.7"/>
<line x1="959.5" y1="552.5" x2="957.0" y2="586.3" stroke="#3a3a3e" stroke-width="1.7"/>
<line x1="964.9" y1="553.0" x2="962.4" y2="586.5" stroke="#3a3a3e" stroke-width="1.7"/>
<line x1="970.3" y1="553.4" x2="967.8" y2="586.7" stroke="#3a3a3e" stroke-width="1.7"/>
<line x1="975.7" y1="553.9" x2="973.2" y2="586.9" stroke="#3a3a3e" stroke-width="1.7"/>
<polygon points="766,535.6 905,551.3 975,553 975,555 905,553.5 766,538" fill="#8a8a8e" />
<polygon points="881,584.5 923,587 923,597 881,595" fill="#909094" />
<linearGradient id="gSlab" x1="0" y1="588" x2="0" y2="610" gradientUnits="userSpaceOnUse"><stop offset="0" stop-color="#8c8c90"/><stop offset="0.5" stop-color="#a8a8ac"/><stop offset="0.75" stop-color="#c4c4c8"/><stop offset="1" stop-color="#bcbcc0"/></linearGradient>
<polygon points="923,586 1080.5,597.6 1067,611.6 923,609.8" fill="url(#gSlab)" />
<polygon points="1067,604 1080.5,597.6 1072,756 1058,753" fill="#c2c2c6" />
<polygon points="1053,609.8 1067,611.6 1058,753 1046,751" fill="#8e8e92" />
<polygon points="859,732 1078,752.5 1078,760 934,751 857,740" fill="#a6a6aa" />
<polygon points="857,740 934,751 934,758.7 857,746" fill="#8c8c90" />
<polygon points="934,751 1078,760 1077.5,768 934,758.7" fill="#c6c6ca" />
<polygon points="975,546.6 1019.5,553 1017,587 975,585.7" fill="#d040d8" />
<line x1="979.0" y1="548.3" x2="977.0" y2="585.6" stroke="#7a1a80" stroke-width="1.5"/>
<line x1="981.3" y1="548.3" x2="979.3" y2="585.6" stroke="#ff80ff" stroke-width="0.8"/>
<line x1="984.0" y1="549.0" x2="982.0" y2="585.7" stroke="#7a1a80" stroke-width="1.5"/>
<line x1="986.3" y1="549.0" x2="984.3" y2="585.7" stroke="#ff80ff" stroke-width="0.8"/>
<line x1="989.0" y1="549.7" x2="987.0" y2="585.9" stroke="#7a1a80" stroke-width="1.5"/>
<line x1="991.3" y1="549.7" x2="989.3" y2="585.9" stroke="#ff80ff" stroke-width="0.8"/>
<line x1="994.0" y1="550.4" x2="992.0" y2="586.0" stroke="#7a1a80" stroke-width="1.5"/>
<line x1="996.3" y1="550.4" x2="994.3" y2="586.0" stroke="#ff80ff" stroke-width="0.8"/>
<line x1="999.0" y1="551.1" x2="997.0" y2="586.2" stroke="#7a1a80" stroke-width="1.5"/>
<line x1="1001.3" y1="551.1" x2="999.3" y2="586.2" stroke="#ff80ff" stroke-width="0.8"/>
<line x1="1004.0" y1="551.8" x2="1002.0" y2="586.3" stroke="#7a1a80" stroke-width="1.5"/>
<line x1="1006.3" y1="551.8" x2="1004.3" y2="586.3" stroke="#ff80ff" stroke-width="0.8"/>
<line x1="1009.0" y1="552.5" x2="1007.0" y2="586.5" stroke="#7a1a80" stroke-width="1.5"/>
<line x1="1011.3" y1="552.5" x2="1009.3" y2="586.5" stroke="#ff80ff" stroke-width="0.8"/>
<line x1="1014.0" y1="553.2" x2="1012.0" y2="586.6" stroke="#7a1a80" stroke-width="1.5"/>
<line x1="1016.3" y1="553.2" x2="1014.3" y2="586.6" stroke="#ff80ff" stroke-width="0.8"/>
<line x1="1019.0" y1="553.9" x2="1017.0" y2="586.8" stroke="#7a1a80" stroke-width="1.5"/>
<line x1="1021.3" y1="553.9" x2="1019.3" y2="586.8" stroke="#ff80ff" stroke-width="0.8"/>
<polygon points="975,546.6 1019.5,553 1017,587 975,585.7" fill="none" stroke="#ff00ff" stroke-width="1"/>
<polygon points="979,544 993,546 993,550 979,549" fill="#2a3aa0" />
<polygon points="976,586 990,587 989,591 976,590" fill="#2a3a90" />
<polygon points="923,609 1067,611 1057,622 947,618 923,614" fill="#9a9a9e" />
<polygon points="902,608.5 1057,622 1050,624 947,618" fill="#4a4a9c" />
<polygon points="902,610 947,618 941,741 893,734" fill="#5b5bbd" />
<polygon points="947,618 962,619 956,742 941,741" fill="#7272de" />
<polygon points="962,619 1050.5,623 1048,657 1041.7,657 1037.3,714 1044,715 1041,748 956,742" fill="#6b6cee" />
<polygon points="1050.5,623 1057,622 1055.6,657 1049.8,657 1046,714 1049.8,715 1046,749 1041,748 1044,715 1037.3,714 1041.7,657 1048,657" fill="#2a2ad0" />
<polygon points="940.6,651.5 967.5,652.4 965,708 937,707" fill="#6e6edc" stroke="#10c070" stroke-width="0.8"/>
<polygon points="902,608.5 1057,622 1055.6,657 1049.8,657 1046,714 1049.8,715 1046,749 893,734" fill="none" stroke="#10c070" stroke-width="1"/>
<polyline points="902,610 947,618 1050,623" fill="none" stroke="#10c070" stroke-width="0.8"/>
<polyline points="947,618 941,741" fill="none" stroke="#10c070" stroke-width="0.8"/>
<polyline points="962,619 956,742" fill="none" stroke="#10c070" stroke-width="0.8"/>
<polyline points="1041.7,657 1049.8,657 M1037.3,714 1049.8,715" fill="none" stroke="#10c070" stroke-width="0.8"/>
<ellipse cx="950" cy="612" rx="7" ry="2" fill="#303070"/>
<ellipse cx="965" cy="613" rx="7" ry="2" fill="#303070"/>
<ellipse cx="985" cy="615" rx="7" ry="2" fill="#303070"/>
<ellipse cx="1005" cy="617" rx="7" ry="2" fill="#303070"/>
<ellipse cx="1025" cy="619" rx="7" ry="2" fill="#303070"/>
<ellipse cx="1003" cy="617" rx="8" ry="2.5" fill="#8ab0e0"/>
<polygon points="650,474 740,478.5 801,481.6 1100,506 1100,515 785,498" fill="#a39d4c" />
<polygon points="650,475 785,498 785,507 650,482" fill="#d8d46a" />
<polygon points="785,498 1100,515 1098,524 785,507" fill="#e8e46e" />
<polyline points="650,474 801,481.6 1100,506 1100,515 1098,524 785,507 650,482 650,474 785,498 1100,515" fill="none" stroke="#f4f000" stroke-width="1"/>
<ellipse cx="875" cy="494.3" rx="86" ry="6" transform="rotate(4.9 875 494.3)" fill="#8e8a40" stroke="#ff2020" stroke-width="1"/>
<linearGradient id="gRed2" x1="801" y1="0" x2="950" y2="0" gradientUnits="userSpaceOnUse"><stop offset="0" stop-color="#c86a6a"/><stop offset="0.2" stop-color="#8a2020"/><stop offset="0.45" stop-color="#c07070"/><stop offset="0.6" stop-color="#6a1010"/><stop offset="0.8" stop-color="#e8a0a8"/><stop offset="1" stop-color="#a83a3a"/></linearGradient>
<polygon points="801,476.5 950,488.5 950,501.6 801,488.5" fill="url(#gRed2)" />
<linearGradient id="gSil2" x1="793" y1="0" x2="973" y2="0" gradientUnits="userSpaceOnUse"><stop offset="0" stop-color="#3a3a3c"/><stop offset="0.15" stop-color="#5a5a5c"/><stop offset="0.35" stop-color="#a0a0a2"/><stop offset="0.55" stop-color="#a8a8ac"/><stop offset="0.75" stop-color="#f4f4f8"/><stop offset="0.9" stop-color="#c8c8d0"/><stop offset="1" stop-color="#606064"/></linearGradient>
<polygon points="793,467 973,476 973,485 970.7,487.8 880,486.6 816,478 801,477" fill="url(#gSil2)" />
<polygon points="730.4,442.2 880,450.1 1024.5,469.3 880,462.7 780,460.7 730.4,451.7" fill="#8a8a8e" />
<polygon points="780,460.7 880,462.7 1024.5,469.3 1024.5,478.2 973,475.8 880,477 801,476.2 780,473.2" fill="#a6a6aa" />
</g></svg>
</body></html>
